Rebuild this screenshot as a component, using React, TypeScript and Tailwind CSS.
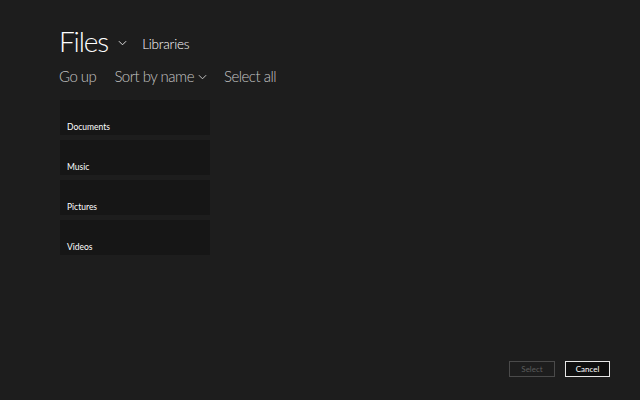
import React from "react";

const Chevron = ({ className }: { className?: string }) => (
  <svg viewBox="0 0 10 6" className={className} fill="none" stroke="currentColor" strokeWidth="1.1">
    <path d="M1 1 L5 5 L9 1" />
  </svg>
);

export default function App() {
  const items = ["Documents", "Music", "Pictures", "Videos"];
  return (
    <div
      className="w-[640px] h-[400px] bg-[#1d1d1d] text-white relative overflow-hidden"
      style={{ fontFamily: 'Lato, "Open Sans", sans-serif' }}
    >
      <div className="flex flex-col pl-[59px] pt-[21px]">
        <div className="flex items-center h-[40px]">
          <span className="text-[28px] font-light leading-none tracking-[-1.1px]">Files</span>
          <Chevron className="w-[9px] h-[6px] ml-[10px] mt-[3px] text-[#e0e0e0]" />
          <span className="text-[13.5px] font-light ml-[15px] mt-[7px] text-white tracking-[-0.2px]">Libraries</span>
        </div>
        <div className="flex items-center h-[28px] mt-[1px] text-[15px] font-light text-[#c4c4c4] tracking-[-0.5px]">
          <span>Go up</span>
          <span className="ml-[18px]">Sort by name</span>
          <Chevron className="w-[9px] h-[6px] ml-[4px] mt-[2px]" />
          <span className="ml-[17px]">Select all</span>
        </div>
        <div className="flex flex-col gap-[5px] mt-[10px] ml-[1px]">
          {items.map((it) => (
            <div key={it} className="w-[150px] h-[35px] bg-[#161616] flex items-end pl-[7px] pb-[4px]">
              <span className="text-[8.5px] leading-none text-white">{it}</span>
            </div>
          ))}
        </div>
      </div>
      <div className="absolute right-[30px] bottom-[23px] flex gap-[10px]">
        <div className="w-[46px] h-[16px] border border-[#4a4a4a] flex items-center justify-center text-[8px] text-[#5c5c5c]">
          Select
        </div>
        <div className="w-[45px] h-[16px] border border-[#e6e6e6] bg-[#0f0f0f] flex items-center justify-center text-[8px] text-white">
          Cancel
        </div>
      </div>
    </div>
  );
}
